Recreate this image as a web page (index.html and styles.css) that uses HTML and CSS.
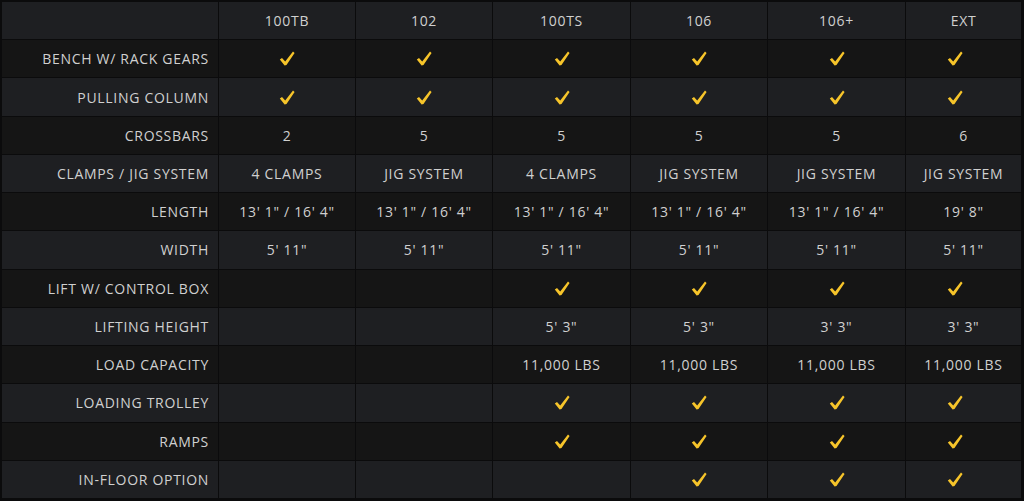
FILE: index.html
```html
<!DOCTYPE html>
<html>
<head>
<meta charset="utf-8">
<link rel="stylesheet" href="styles.css">
</head>
<body>
<div class="table">
  <div class="cell hd label"></div>
  <div class="cell hd">100TB</div>
  <div class="cell hd">102</div>
  <div class="cell hd">100TS</div>
  <div class="cell hd">106</div>
  <div class="cell hd">106+</div>
  <div class="cell hd">EXT</div>

  <div class="cell dk label">BENCH W/ RACK GEARS</div>
  <div class="cell dk"><svg class="ck" viewBox="0 0 16 15"><path d="M0.8 8.5 L3 6.9 L6.2 10.4 L14 0.6 L15.6 1.9 L7.5 13.9 L5.6 14.4 Z"/></svg></div>
  <div class="cell dk"><svg class="ck" viewBox="0 0 16 15"><path d="M0.8 8.5 L3 6.9 L6.2 10.4 L14 0.6 L15.6 1.9 L7.5 13.9 L5.6 14.4 Z"/></svg></div>
  <div class="cell dk"><svg class="ck" viewBox="0 0 16 15"><path d="M0.8 8.5 L3 6.9 L6.2 10.4 L14 0.6 L15.6 1.9 L7.5 13.9 L5.6 14.4 Z"/></svg></div>
  <div class="cell dk"><svg class="ck" viewBox="0 0 16 15"><path d="M0.8 8.5 L3 6.9 L6.2 10.4 L14 0.6 L15.6 1.9 L7.5 13.9 L5.6 14.4 Z"/></svg></div>
  <div class="cell dk"><svg class="ck" viewBox="0 0 16 15"><path d="M0.8 8.5 L3 6.9 L6.2 10.4 L14 0.6 L15.6 1.9 L7.5 13.9 L5.6 14.4 Z"/></svg></div>
  <div class="cell dk ext"><svg class="ck" viewBox="0 0 16 15"><path d="M0.8 8.5 L3 6.9 L6.2 10.4 L14 0.6 L15.6 1.9 L7.5 13.9 L5.6 14.4 Z"/></svg></div>

  <div class="cell lt label">PULLING COLUMN</div>
  <div class="cell lt"><svg class="ck" viewBox="0 0 16 15"><path d="M0.8 8.5 L3 6.9 L6.2 10.4 L14 0.6 L15.6 1.9 L7.5 13.9 L5.6 14.4 Z"/></svg></div>
  <div class="cell lt"><svg class="ck" viewBox="0 0 16 15"><path d="M0.8 8.5 L3 6.9 L6.2 10.4 L14 0.6 L15.6 1.9 L7.5 13.9 L5.6 14.4 Z"/></svg></div>
  <div class="cell lt"><svg class="ck" viewBox="0 0 16 15"><path d="M0.8 8.5 L3 6.9 L6.2 10.4 L14 0.6 L15.6 1.9 L7.5 13.9 L5.6 14.4 Z"/></svg></div>
  <div class="cell lt"><svg class="ck" viewBox="0 0 16 15"><path d="M0.8 8.5 L3 6.9 L6.2 10.4 L14 0.6 L15.6 1.9 L7.5 13.9 L5.6 14.4 Z"/></svg></div>
  <div class="cell lt"><svg class="ck" viewBox="0 0 16 15"><path d="M0.8 8.5 L3 6.9 L6.2 10.4 L14 0.6 L15.6 1.9 L7.5 13.9 L5.6 14.4 Z"/></svg></div>
  <div class="cell lt ext"><svg class="ck" viewBox="0 0 16 15"><path d="M0.8 8.5 L3 6.9 L6.2 10.4 L14 0.6 L15.6 1.9 L7.5 13.9 L5.6 14.4 Z"/></svg></div>

  <div class="cell dk label">CROSSBARS</div>
  <div class="cell dk">2</div>
  <div class="cell dk">5</div>
  <div class="cell dk">5</div>
  <div class="cell dk">5</div>
  <div class="cell dk">5</div>
  <div class="cell dk">6</div>

  <div class="cell lt label">CLAMPS / JIG SYSTEM</div>
  <div class="cell lt">4 CLAMPS</div>
  <div class="cell lt">JIG SYSTEM</div>
  <div class="cell lt">4 CLAMPS</div>
  <div class="cell lt">JIG SYSTEM</div>
  <div class="cell lt">JIG SYSTEM</div>
  <div class="cell lt">JIG SYSTEM</div>

  <div class="cell dk label">LENGTH</div>
  <div class="cell dk">13' 1" / 16' 4"</div>
  <div class="cell dk">13' 1" / 16' 4"</div>
  <div class="cell dk">13' 1" / 16' 4"</div>
  <div class="cell dk">13' 1" / 16' 4"</div>
  <div class="cell dk">13' 1" / 16' 4"</div>
  <div class="cell dk">19' 8"</div>

  <div class="cell lt label">WIDTH</div>
  <div class="cell lt">5' 11"</div>
  <div class="cell lt">5' 11"</div>
  <div class="cell lt">5' 11"</div>
  <div class="cell lt">5' 11"</div>
  <div class="cell lt">5' 11"</div>
  <div class="cell lt">5' 11"</div>

  <div class="cell dk label">LIFT W/ CONTROL BOX</div>
  <div class="cell dk"></div>
  <div class="cell dk"></div>
  <div class="cell dk"><svg class="ck" viewBox="0 0 16 15"><path d="M0.8 8.5 L3 6.9 L6.2 10.4 L14 0.6 L15.6 1.9 L7.5 13.9 L5.6 14.4 Z"/></svg></div>
  <div class="cell dk"><svg class="ck" viewBox="0 0 16 15"><path d="M0.8 8.5 L3 6.9 L6.2 10.4 L14 0.6 L15.6 1.9 L7.5 13.9 L5.6 14.4 Z"/></svg></div>
  <div class="cell dk"><svg class="ck" viewBox="0 0 16 15"><path d="M0.8 8.5 L3 6.9 L6.2 10.4 L14 0.6 L15.6 1.9 L7.5 13.9 L5.6 14.4 Z"/></svg></div>
  <div class="cell dk ext"><svg class="ck" viewBox="0 0 16 15"><path d="M0.8 8.5 L3 6.9 L6.2 10.4 L14 0.6 L15.6 1.9 L7.5 13.9 L5.6 14.4 Z"/></svg></div>

  <div class="cell lt label">LIFTING HEIGHT</div>
  <div class="cell lt"></div>
  <div class="cell lt"></div>
  <div class="cell lt">5' 3"</div>
  <div class="cell lt">5' 3"</div>
  <div class="cell lt">3' 3"</div>
  <div class="cell lt">3' 3"</div>

  <div class="cell dk label">LOAD CAPACITY</div>
  <div class="cell dk"></div>
  <div class="cell dk"></div>
  <div class="cell dk">11,000 LBS</div>
  <div class="cell dk">11,000 LBS</div>
  <div class="cell dk">11,000 LBS</div>
  <div class="cell dk">11,000 LBS</div>

  <div class="cell lt label">LOADING TROLLEY</div>
  <div class="cell lt"></div>
  <div class="cell lt"></div>
  <div class="cell lt"><svg class="ck" viewBox="0 0 16 15"><path d="M0.8 8.5 L3 6.9 L6.2 10.4 L14 0.6 L15.6 1.9 L7.5 13.9 L5.6 14.4 Z"/></svg></div>
  <div class="cell lt"><svg class="ck" viewBox="0 0 16 15"><path d="M0.8 8.5 L3 6.9 L6.2 10.4 L14 0.6 L15.6 1.9 L7.5 13.9 L5.6 14.4 Z"/></svg></div>
  <div class="cell lt"><svg class="ck" viewBox="0 0 16 15"><path d="M0.8 8.5 L3 6.9 L6.2 10.4 L14 0.6 L15.6 1.9 L7.5 13.9 L5.6 14.4 Z"/></svg></div>
  <div class="cell lt ext"><svg class="ck" viewBox="0 0 16 15"><path d="M0.8 8.5 L3 6.9 L6.2 10.4 L14 0.6 L15.6 1.9 L7.5 13.9 L5.6 14.4 Z"/></svg></div>

  <div class="cell dk label">RAMPS</div>
  <div class="cell dk"></div>
  <div class="cell dk"></div>
  <div class="cell dk"><svg class="ck" viewBox="0 0 16 15"><path d="M0.8 8.5 L3 6.9 L6.2 10.4 L14 0.6 L15.6 1.9 L7.5 13.9 L5.6 14.4 Z"/></svg></div>
  <div class="cell dk"><svg class="ck" viewBox="0 0 16 15"><path d="M0.8 8.5 L3 6.9 L6.2 10.4 L14 0.6 L15.6 1.9 L7.5 13.9 L5.6 14.4 Z"/></svg></div>
  <div class="cell dk"><svg class="ck" viewBox="0 0 16 15"><path d="M0.8 8.5 L3 6.9 L6.2 10.4 L14 0.6 L15.6 1.9 L7.5 13.9 L5.6 14.4 Z"/></svg></div>
  <div class="cell dk ext"><svg class="ck" viewBox="0 0 16 15"><path d="M0.8 8.5 L3 6.9 L6.2 10.4 L14 0.6 L15.6 1.9 L7.5 13.9 L5.6 14.4 Z"/></svg></div>

  <div class="cell lt label">IN-FLOOR OPTION</div>
  <div class="cell lt"></div>
  <div class="cell lt"></div>
  <div class="cell lt"></div>
  <div class="cell lt"><svg class="ck" viewBox="0 0 16 15"><path d="M0.8 8.5 L3 6.9 L6.2 10.4 L14 0.6 L15.6 1.9 L7.5 13.9 L5.6 14.4 Z"/></svg></div>
  <div class="cell lt"><svg class="ck" viewBox="0 0 16 15"><path d="M0.8 8.5 L3 6.9 L6.2 10.4 L14 0.6 L15.6 1.9 L7.5 13.9 L5.6 14.4 Z"/></svg></div>
  <div class="cell lt ext"><svg class="ck" viewBox="0 0 16 15"><path d="M0.8 8.5 L3 6.9 L6.2 10.4 L14 0.6 L15.6 1.9 L7.5 13.9 L5.6 14.4 Z"/></svg></div>
</div>
</body>
</html>
```

FILE: styles.css
```css
html, body {
  margin: 0;
  padding: 0;
  background: #0b0b0c;
}
.table {
  box-sizing: border-box;
  width: 1024px;
  height: 501px;
  padding: 2px 3px 3px 2px;
  background: #0b0b0c;
  display: grid;
  grid-template-columns: 216px 136px 136px 137px 136px 137px 1fr;
  grid-template-rows: repeat(13, 1fr);
  gap: 1px;
  font-family: "Open Sans", "DejaVu Sans", sans-serif;
  font-size: 14px;
  letter-spacing: 0.7px;
  color: #d0d0d0;
}
.cell {
  display: flex;
  align-items: center;
  justify-content: center;
  white-space: nowrap;
}
.label {
  justify-content: flex-end;
  padding-right: 9px;
}
.ext {
  padding-right: 18px;
}
.hd, .lt { background: #1e1f22; }
.dk { background: #151515; }
.ck {
  width: 16px;
  height: 15px;
  fill: #f6c42a;
}
```
